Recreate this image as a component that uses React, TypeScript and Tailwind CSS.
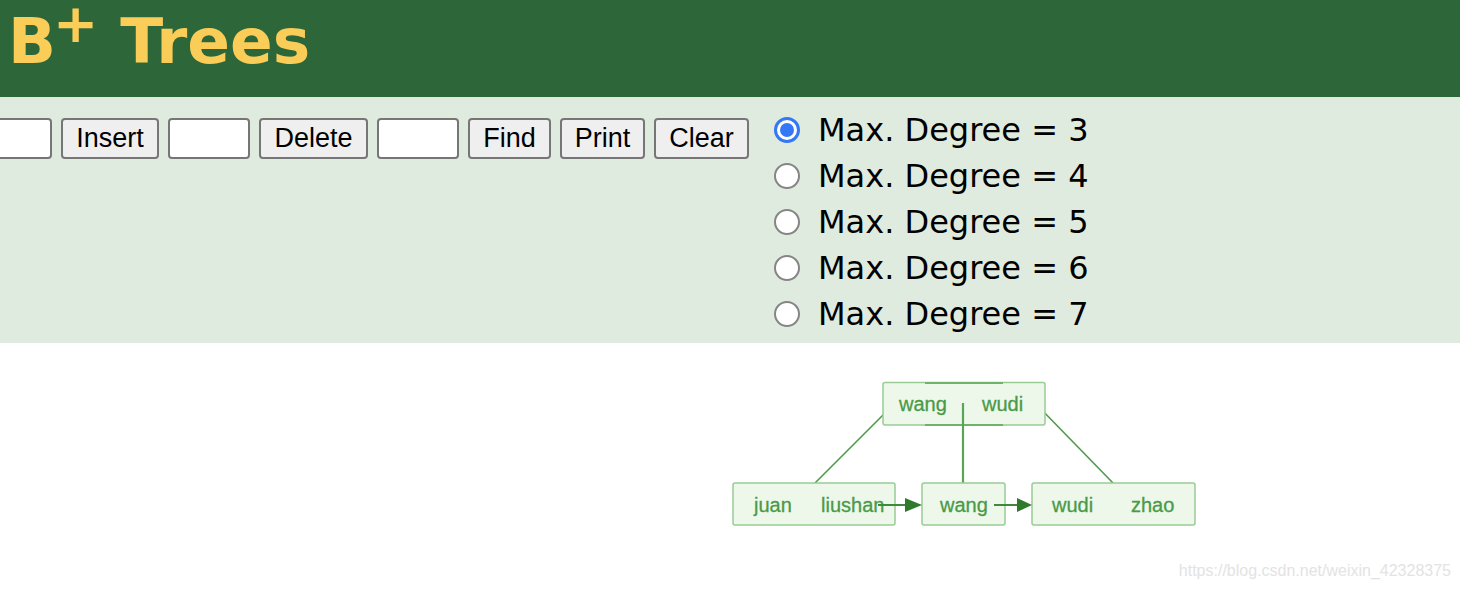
import React from 'react';

const degrees = [3, 4, 5, 6, 7];

function TextBox({ width }: { width: number }) {
  return (
    <input
      type="text"
      className="h-[41px] shrink-0 rounded-[4px] border-2 border-[#767676] bg-white"
      style={{ width }}
    />
  );
}

function Btn({ label, width }: { label: string; width: number }) {
  return (
    <button
      className="h-[41px] shrink-0 rounded-[4px] border-2 border-[#767676] bg-[#efefef] text-[27px] leading-none text-black"
      style={{ width }}
    >
      {label}
    </button>
  );
}

function Radio({ checked }: { checked: boolean }) {
  if (checked) {
    return (
      <span className="flex h-[26px] w-[26px] shrink-0 items-center justify-center rounded-full border-[3px] border-[#3478f6] bg-white">
        <span className="h-[14px] w-[14px] rounded-full bg-[#3478f6]" />
      </span>
    );
  }
  return <span className="h-[26px] w-[26px] shrink-0 rounded-full border-2 border-[#858585] bg-white" />;
}

function Tree() {
  const box = { fill: '#edf8eb', stroke: '#98cc94', strokeWidth: 1.5 };
  const txt = {
    fill: '#4a9a47',
    stroke: '#4a9a47',
    strokeWidth: 0.3,
    fontSize: 20,
    fontFamily: '"Liberation Sans", Arial, sans-serif',
  };
  return (
    <svg width="1460" height="247" viewBox="0 0 1460 247" className="block">
      {/* edges */}
      <line x1="893" y1="62" x2="815" y2="140" stroke="#4e9a4b" strokeWidth="1.6" />
      <line x1="1037" y1="62" x2="1113" y2="140" stroke="#4e9a4b" strokeWidth="1.6" />

      {/* root */}
      <rect x="883" y="39.5" width="162" height="42.5" rx="2" {...box} />
      <line x1="925" y1="40" x2="1003" y2="40" stroke="#6db369" strokeWidth="2" />
      <line x1="925" y1="82" x2="1003" y2="82" stroke="#6db369" strokeWidth="2" />
      <text x="899" y="68" {...txt}>wang</text>
      <text x="982" y="68" {...txt}>wudi</text>
      <line x1="963" y1="60" x2="963" y2="140" stroke="#5aa457" strokeWidth="2.2" />

      {/* leaves */}
      <rect x="733" y="140" width="162" height="42" rx="2" {...box} />
      <text x="754" y="169" {...txt}>juan</text>
      <text x="821" y="169" {...txt}>liushan</text>

      <rect x="922" y="140" width="83" height="42" rx="2" {...box} />
      <text x="940" y="169" {...txt}>wang</text>

      <rect x="1032" y="140" width="163" height="42" rx="2" {...box} />
      <text x="1052" y="169" {...txt}>wudi</text>
      <text x="1131" y="169" {...txt}>zhao</text>

      {/* next pointers */}
      <line x1="878" y1="162" x2="906" y2="162" stroke="#3d8a3a" strokeWidth="2" />
      <polygon points="905,155 922,162 905,169" fill="#2f7a2d" />
      <line x1="994" y1="162" x2="1018" y2="162" stroke="#3d8a3a" strokeWidth="2" />
      <polygon points="1017,155 1032,162 1017,169" fill="#2f7a2d" />
    </svg>
  );
}

export default function App() {
  return (
    <div className="relative h-[590px] w-[1460px] overflow-hidden bg-white">
      <header className="h-[97px] bg-[#2c6639] pl-[8px] pt-[6px]">
        <h1 className="text-[63px] font-bold leading-[72px] text-[#f9cd57] [font-family:'DejaVu_Sans',Verdana,sans-serif]">
          B<span className="relative -top-[21px] -ml-[3px] text-[54px] leading-none">+</span> Trees
        </h1>
      </header>

      <section className="flex h-[246px] items-start bg-[#e0ebdf] [font-family:'Liberation_Sans',Arial,sans-serif]">
        <div className="-ml-[30px] flex gap-[9px] pt-[21px]">
          <TextBox width={82} />
          <Btn label="Insert" width={98} />
          <TextBox width={82} />
          <Btn label="Delete" width={109} />
          <TextBox width={82} />
          <Btn label="Find" width={83} />
          <Btn label="Print" width={85} />
          <Btn label="Clear" width={95} />
        </div>

        <div className="ml-[25px] flex flex-col pt-[10px] [font-family:'DejaVu_Sans',Verdana,sans-serif]">
          {degrees.map((d) => (
            <label key={d} className="flex h-[46px] items-center gap-[18px] text-[32px] text-black">
              <Radio checked={d === 3} />
              <span>Max. Degree = {d}</span>
            </label>
          ))}
        </div>
      </section>

      <Tree />

      <div className="absolute bottom-[7px] right-[9px] text-[16px] text-[#e3e3e3] [font-family:'Liberation_Sans',Arial,sans-serif]">
        https://blog.csdn.net/weixin_42328375
      </div>
    </div>
  );
}
